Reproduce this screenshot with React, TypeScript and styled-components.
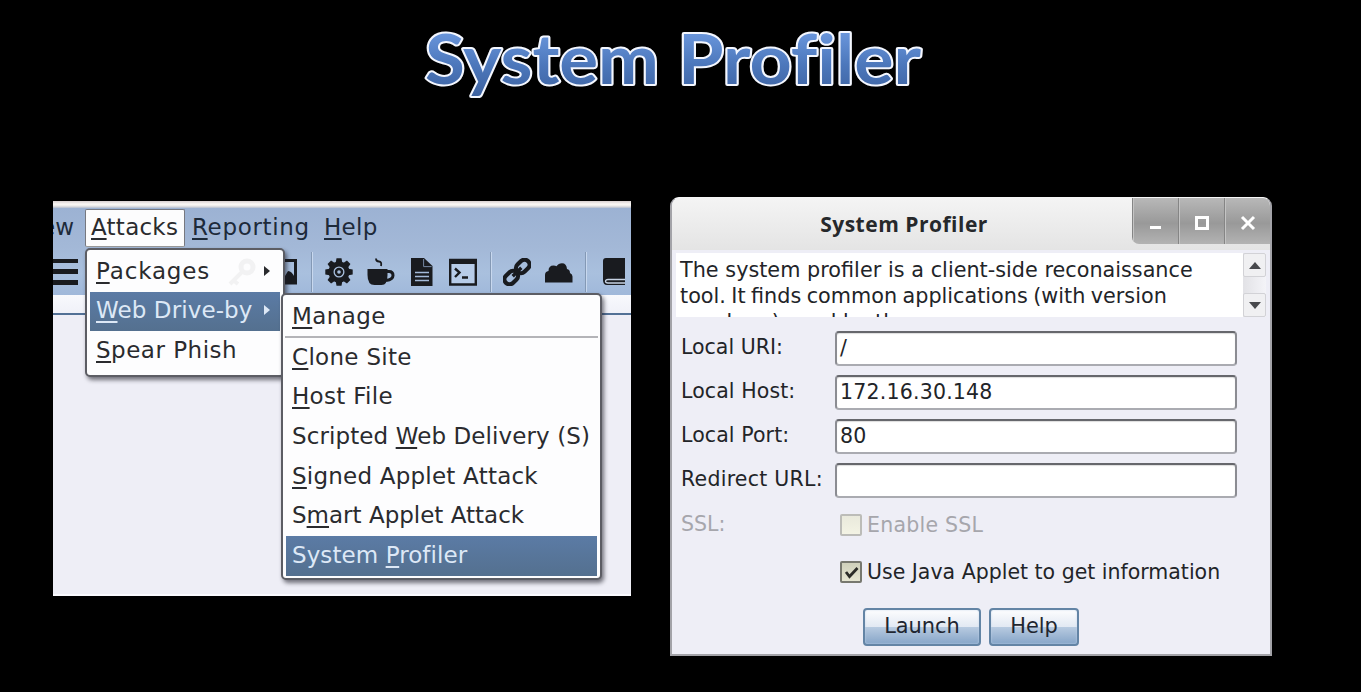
import React from "react";
import styled, { createGlobalStyle, css } from "styled-components";

const GlobalStyle = createGlobalStyle`
  * { box-sizing: border-box; }
  html, body { margin: 0; background: #000; }
  body { width: 1361px; height: 692px; overflow: hidden; font-family: "DejaVu Sans", sans-serif; color: #222428; }
`;

const Slide = styled.main`
  width: 1361px;
  height: 692px;
  background: #000;
  overflow: hidden;
`;

const TitleArt = styled.svg`
  display: block;
  height: 120px;
  width: 1361px;
  font-family: Lato, sans-serif;
  font-weight: 700;
  font-variant-ligatures: none;
`;

const Stage = styled.div`
  display: flex;
  align-items: flex-start;
  gap: 39px;
  padding: 77px 0 0 53px;
`;

/* ---------- Application window ---------- */

const AppWindow = styled.section`
  width: 578px;
  height: 395px;
  margin-top: 4px;
  overflow: hidden;
  position: relative;
  display: flex;
  flex-direction: column;
  background: #eeeef6;
  border-bottom: 2px solid #fafaff;
  font-size: 23px;
`;

const TopStrip = styled.div`
  height: 7px;
  flex: none;
  background: linear-gradient(#d8d0d0, #fbf8f6 45%, #eceae8 70%, #b4bccd);
`;

const Chrome = styled.div`
  height: 87px;
  flex: none;
  background: linear-gradient(#9cb2d3, #a3b8d7 45%, #a9c0de 75%, #a0b8da);
`;

const MenuBar = styled.nav`
  display: flex;
  height: 40px;
  line-height: 38px;
  overflow: hidden;
`;

const MenuTitle = styled.span<{ $w: number; $open?: boolean; $pull?: number; $track?: number }>`
  width: ${(p) => p.$w}px;
  flex: none;
  white-space: nowrap;
  padding-left: 6px;
  color: #1d2a3a;
  text-indent: ${(p) => p.$pull ?? 0}px;
  letter-spacing: ${(p) => p.$track ?? 0}px;
  ${(p) =>
    p.$open &&
    css`
      height: 38px;
      margin-top: 1px;
      line-height: 34px;
      background: #fcfcfd;
      border: 1px solid #77787f;
      border-bottom-color: #999;
      border-radius: 2px;
      padding-left: 5px;
      color: #2a2b2e;
    `}
`;

const ToolBar = styled.div`
  display: flex;
  align-items: center;
  height: 47px;
  padding-bottom: 0;
`;

const Tool = styled.svg<{ $ml: number; $w?: number }>`
  width: ${(p) => p.$w ?? 28}px;
  height: 28px;
  flex: none;
  margin-left: ${(p) => p.$ml}px;
  color: #191b1f;
`;

const ToolRule = styled.i<{ $ml: number }>`
  width: 2px;
  height: 40px;
  flex: none;
  margin-left: ${(p) => p.$ml}px;
  border-left: 1px solid #8499b5;
  border-right: 1px solid #c8d8ee;
`;

const TabStrip = styled.div`
  height: 20px;
  flex: none;
  background: linear-gradient(#f8f9fd, #f0f1f8);
  border-bottom: 2px solid #527095;
`;

const Popup = styled.div<{ $x: number; $y: number; $w: number; $h: number }>`
  position: absolute;
  left: ${(p) => p.$x}px;
  top: ${(p) => p.$y}px;
  width: ${(p) => p.$w}px;
  height: ${(p) => p.$h}px;
  background: #fdfdfe;
  border: 2px solid #5c5d64;
  border-radius: 5px;
  padding: 2px 3px;
  box-shadow: 2px 3px 4px rgba(30, 30, 40, 0.6);
`;

const Item = styled.div<{ $active?: boolean; $track?: number; $h?: number }>`
  position: relative;
  display: flex;
  align-items: center;
  justify-content: space-between;
  height: ${(p) => p.$h ?? 39.6}px;
  padding: 0 10px 2px 6px;
  white-space: nowrap;
  letter-spacing: ${(p) => p.$track ?? 0}px;
  color: ${(p) => (p.$active ? "#dde8f6" : "#2a2b2e")};
  background: ${(p) => (p.$active ? "linear-gradient(#5b7ba5, #54708f)" : "transparent")};
`;

const Key = styled.span`
  text-decoration: underline;
  text-decoration-thickness: 1.5px;
  text-underline-offset: 3px;
  text-decoration-skip-ink: none;
`;

const Arrow = styled.i`
  position: relative;
  border: 5px solid transparent;
  border-left: 6px solid currentColor;
  border-right: 0;
`;

const Divider = styled.hr`
  height: 2px;
  margin: 0 -1px;
  border: 0;
  background: #b4b4b8;
`;

const GhostIcon = styled.svg`
  position: absolute;
  left: 138px;
  top: 6px;
  width: 28px;
  height: 28px;
  color: #f2f2f3;
`;

/* ---------- Dialog ---------- */

const Dialog = styled.section`
  width: 602px;
  height: 459px;
  display: flex;
  flex-direction: column;
  background: #eeeef6;
  border: 2px solid #a3a3a8;
  border-top: 1px solid #f6f6f6;
  border-radius: 9px 9px 0 0;
  overflow: hidden;
  font-size: 20.5px;
`;

const TitleBar = styled.header`
  display: flex;
  height: 52px;
  flex: none;
  background: linear-gradient(#f4f4f4, #e4e4e4);
`;

const DialogTitle = styled.h2`
  flex: 1;
  margin: 0;
  padding-left: 4px;
  text-align: center;
  font: 700 21px/52px "Open Sans", "Noto Sans", sans-serif;
  letter-spacing: 0.5px;
  color: #26282b;
`;

const WindowButtons = styled.div`
  display: flex;
  width: 138px;
  height: 46px;
  border-radius: 0 0 0 7px;
  overflow: hidden;
`;

const WindowButton = styled.span`
  flex: 1;
  display: grid;
  place-items: center;
  background: linear-gradient(#b8b8b8, #999 55%, #b3b3b3);
  border-left: 1px solid #858585;
  box-shadow: inset 1px 0 #c4c4c4;
  svg { width: 16px; height: 16px; margin-top: 3px; }
`;

const About = styled.div`
  display: flex;
  height: 64px;
  flex: none;
  margin: 3px 4px 0;
`;

const AboutText = styled.p`
  width: 567px;
  height: 64px;
  margin: 0;
  padding: 4px 0 0 4px;
  background: #fff;
  overflow: hidden;
  white-space: pre;
  font-size: 20.75px;
  line-height: 26px;
`;

const Line = styled.span<{ $gap?: number }>`
  display: block;
  word-spacing: ${(p) => p.$gap ?? 0}px;
`;

const ScrollBar = styled.div`
  width: 23px;
  display: flex;
  flex-direction: column;
  justify-content: space-between;
  background: linear-gradient(90deg, #e2e2e6, #f4f4f8);
`;

const ScrollButton = styled.span`
  height: 24px;
  display: grid;
  place-items: center;
  background: #f0f0f2;
  border: 1px solid #d2d2d6;
  border-radius: 2px;
  svg { width: 12px; height: 7px; }
`;

const Form = styled.div`
  padding: 9px 33px 0 10px;
`;

const Row = styled.div<{ $h?: number; $dim?: boolean }>`
  display: flex;
  align-items: center;
  height: ${(p) => p.$h ?? 44}px;
  color: ${(p) => (p.$dim ? "#a6a6ac" : "inherit")};
`;

const Label = styled.label<{ $track?: number }>`
  width: 153px;
  flex: none;
  white-space: nowrap;
  padding-bottom: 2px;
  margin-left: -1px;
  margin-right: 1px;
  letter-spacing: ${(p) => p.$track ?? 0}px;
`;

const Field = styled.div`
  flex: 1;
  height: 35px;
  padding-left: 3px;
  line-height: 30px;
  letter-spacing: 0.2px;
  background: #fff;
  border: 2px solid #8b8c92;
  border-top-color: #66676c;
  border-bottom-color: #aaabb1;
  border-radius: 4px;
  box-shadow: inset 0 1px 1px #ddd;
`;

const CheckBox = styled.span<{ $dim?: boolean }>`
  width: 22px;
  height: 22px;
  margin: 0 5px;
  display: grid;
  place-items: center;
  flex: none;
  border: 2px solid ${(p) => (p.$dim ? "#bcbcb8" : "#77786f")};
  border-radius: 2px;
  background: ${(p) => (p.$dim ? "linear-gradient(#e9e9dc, #f3f3e4)" : "linear-gradient(#cfd0bb, #e6e6d2)")};
  svg { width: 15px; height: 14px; }
`;

const CheckText = styled.span<{ $track?: number }>`
  white-space: nowrap;
  letter-spacing: ${(p) => p.$track ?? 0}px;
`;

const Actions = styled.div`
  display: flex;
  justify-content: center;
  gap: 8px;
  margin-top: 13px;
`;

const Button = styled.button<{ $w: number }>`
  width: ${(p) => p.$w}px;
  height: 38px;
  padding: 0 0 3px;
  font: 20.9px "DejaVu Sans", sans-serif;
  color: #1f2630;
  border: 2px solid #6384a5;
  border-radius: 4px;
  background: linear-gradient(#fdfdfe, #e2e9f3 49%, #b7cae0 51%, #86a5c8);
  box-shadow: inset 0 0 2px #c3d6ea;
`;

const fields = [
  { name: "Local URI:", value: "/", track: 0 },
  { name: "Local Host:", value: "172.16.30.148", track: 0.1 },
  { name: "Local Port:", value: "80", track: 0.1 },
  { name: "Redirect URL:", value: "", track: 0.25 },
];

const Mnemonic = ({ text }: { text: string }) => {
  const [before, key, after] = text.split("_");
  return (
    <span>
      {before}
      <Key>{key}</Key>
      {after}
    </span>
  );
};

const gearTeeth = [0, 45, 90, 135, 180, 225, 270, 315];

export default function App() {
  return (
    <Slide>
      <GlobalStyle />
      <TitleArt viewBox="0 0 1361 120" role="heading">
        <defs>
          <linearGradient id="titleFill" gradientUnits="userSpaceOnUse" x1="0" y1="32" x2="0" y2="98">
            <stop offset="0" stopColor="#6a96dc" />
            <stop offset="0.5" stopColor="#4c77bb" />
            <stop offset="1" stopColor="#3c619f" />
          </linearGradient>
        </defs>
        <g
          fontSize="68"
          fill="url(#titleFill)"
          stroke="#f4f7ff"
          strokeWidth="4"
          strokeLinejoin="round"
          paintOrder="stroke"
        >
          <text x="425" y="84" textLength="234" lengthAdjust="spacingAndGlyphs">System</text>
          <text x="678" y="84" textLength="243" lengthAdjust="spacingAndGlyphs">Profiler</text>
        </g>
      </TitleArt>

      <Stage>
        <AppWindow>
          <TopStrip />
          <Chrome>
            <MenuBar>
              <MenuTitle $w={32} $pull={-18}>ew</MenuTitle>
              <MenuTitle $w={100} $track={0.25} $open><Mnemonic text="_A_ttacks" /></MenuTitle>
              <MenuTitle $w={133} $track={0.65} $pull={1}><Mnemonic text="_R_eporting" /></MenuTitle>
              <MenuTitle $w={80} $track={0.3}><Mnemonic text="_H_elp" /></MenuTitle>
            </MenuBar>
            <ToolBar>
              <Tool $ml={0} $w={25} viewBox="0 0 25 28" fill="currentColor">
                <path d="M0 1h25v4H0zM0 11h25v5H0zM0 22h25v5H0z" />
              </Tool>
              <Tool $ml={192} viewBox="0 0 28 28">
                <path d="M2 2.5h23.5v22.5H2z" fill="none" stroke="currentColor" strokeWidth="3" />
                <path d="M3 22l7-9 5 5 3-5q4 0 7 7v5H3z" fill="currentColor" />
              </Tool>
              <ToolRule $ml={13} />
              <Tool $ml={12} viewBox="0 0 28 28">
                {gearTeeth.map((a) => (
                  <path key={a} d="M10.5 6L11.5 0.3h5l1 5.7z" fill="currentColor" transform={`rotate(${a} 14 14)`} />
                ))}
                <circle cx="14" cy="14" r="8" fill="none" stroke="currentColor" strokeWidth="5" />
                <circle cx="14" cy="14" r="3" fill="none" stroke="currentColor" strokeWidth="2.4" />
              </Tool>
              <Tool $ml={14} viewBox="0 0 28 28">
                <path d="M0.5 11h20v6q0 10-6 10H7.5Q0.5 27 0.5 17z" fill="currentColor" />
                <path d="M20 13.5h2q4 0 4 4t-7 5" fill="none" stroke="currentColor" strokeWidth="3" />
                <path d="M9 0.5q0 3 3 3t2 4.5" fill="none" stroke="currentColor" strokeWidth="1.8" />
              </Tool>
              <Tool $ml={16} $w={22} viewBox="0 0 22 28">
                <path d="M0 0h13v8h8.5v20H0z" fill="currentColor" />
                <path d="M13 0l8.5 8H13z" fill="currentColor" />
                <path d="M12.6 1v7.6h8" fill="none" stroke="#7486a0" strokeWidth="1" />
                <path d="M4 14.5h14M4 18.5h14M4 22.5h14" stroke="#a4bad9" strokeWidth="1.6" />
              </Tool>
              <Tool $ml={16} viewBox="0 0 28 28">
                <path d="M1.2 2h25.6v24.5H1.2z" fill="#b7cce8" stroke="currentColor" strokeWidth="2.4" />
                <path d="M1 1h26v5H1z" fill="currentColor" />
                <path d="M6 10.5l4.5 4-4.5 4.5M13 19.5h6" fill="none" stroke="currentColor" strokeWidth="2.4" />
              </Tool>
              <ToolRule $ml={13} />
              <Tool $ml={11} viewBox="0 0 28 28">
                <g fill="none" stroke="currentColor" strokeWidth="4.2" transform="rotate(-44 14 14)">
                  <rect x="-1.5" y="9" width="15" height="10" rx="5" />
                  <rect x="14.5" y="9" width="15" height="10" rx="5" />
                  <path d="M8 14h12" strokeWidth="3.4" />
                </g>
              </Tool>
              <Tool $ml={14} viewBox="0 0 28 28">
                <path d="M0 24.5V17q0-3.5 3.5-4 0-5.500 5-5.500 2 0 3 .8 2-3 5.500-3 4.500 0 5 5.700 3 .5 3 4 2.500 1 2.500 3.500v6z" fill="currentColor" />
              </Tool>
              <ToolRule $ml={12} />
              <Tool $ml={16} $w={22} viewBox="0 0 22 28">
                <path d="M3 0h19v27H4q-4 0-4-5V3q0-3 3-3z" fill="currentColor" />
                <path d="M22 21.500H5q-2.500 0-2.500 1.700T5 25h17" fill="none" stroke="#c7d3e4" strokeWidth="1.300" />
              </Tool>
            </ToolBar>
          </Chrome>
          <TabStrip />

          <Popup $x={32} $y={47} $w={200} $h={129}>
            <Item $track={0.85}>
              <GhostIcon viewBox="0 0 28 28">
                <circle cx="19" cy="9" r="6" fill="none" stroke="currentColor" strokeWidth="5" />
                <path d="M14 14L2 26M5 22l5 4" stroke="currentColor" strokeWidth="4" />
              </GhostIcon>
              <Mnemonic text="_P_ackages" />
              <Arrow />
            </Item>
            <Item $active $track={0.1}><Mnemonic text="_W_eb Drive-by" /><Arrow /></Item>
            <Item $track={0.5}><Mnemonic text="_S_pear Phish" /></Item>
          </Popup>

          <Popup $x={228} $y={92} $w={321} $h={287}>
            <Item $h={39} $track={0.4}><Mnemonic text="_M_anage" /></Item>
            <Divider />
            <Item $track={0.3}><Mnemonic text="_C_lone Site" /></Item>
            <Item $track={0.3}><Mnemonic text="_H_ost File" /></Item>
            <Item $track={0.1}><Mnemonic text="Scripted _W_eb Delivery (S)" /></Item>
            <Item $track={0.22}><Mnemonic text="_S_igned Applet Attack" /></Item>
            <Item><Mnemonic text="S_m_art Applet Attack" /></Item>
            <Item $active $track={0.08}><Mnemonic text="System _P_rofiler" /></Item>
          </Popup>
        </AppWindow>

        <Dialog>
          <TitleBar>
            <DialogTitle>System Profiler</DialogTitle>
            <WindowButtons>
              <WindowButton>
                <svg viewBox="0 0 16 16"><path d="M2 12.5h11" stroke="#fff" strokeWidth="3" /></svg>
              </WindowButton>
              <WindowButton>
                <svg viewBox="0 0 16 16"><path d="M2.500 2.500h11v11h-11z" fill="none" stroke="#fff" strokeWidth="3" /></svg>
              </WindowButton>
              <WindowButton>
                <svg viewBox="0 0 16 16"><path d="M2 2l12 12M14 2L2 14" stroke="#fff" strokeWidth="3" /></svg>
              </WindowButton>
            </WindowButtons>
          </TitleBar>

          <About>
            <AboutText>
              <Line $gap={0.15}>The system profiler is a client-side reconaissance</Line>
              <Line $gap={-1.15}>tool. It finds common applications (with version</Line>
              <Line>numbers) used by the user.</Line>
            </AboutText>
            <ScrollBar>
              <ScrollButton><svg viewBox="0 0 12 7"><path d="M0 7l6-7 6 7z" fill="#48494d" /></svg></ScrollButton>
              <ScrollButton><svg viewBox="0 0 12 7"><path d="M0 0h12L6 7z" fill="#48494d" /></svg></ScrollButton>
            </ScrollBar>
          </About>

          <Form>
            {fields.map((f) => (
              <Row key={f.name}>
                <Label $track={f.track}>{f.name}</Label>
                <Field>{f.value}</Field>
              </Row>
            ))}
            <Row $h={46} $dim>
              <Label>SSL:</Label>
              <CheckBox $dim />
              <CheckText $track={0.25}>Enable SSL</CheckText>
            </Row>
            <Row $h={47}>
              <Label />
              <CheckBox>
                <svg viewBox="0 0 15 14"><path d="M2 7l3.500 4.500L13.500 3" fill="none" stroke="#2b2c28" strokeWidth="2.800" /></svg>
              </CheckBox>
              <CheckText>Use Java Applet to get information</CheckText>
            </Row>
          </Form>

          <Actions>
            <Button $w={118}>Launch</Button>
            <Button $w={90}>Help</Button>
          </Actions>
        </Dialog>
      </Stage>
    </Slide>
  );
}
